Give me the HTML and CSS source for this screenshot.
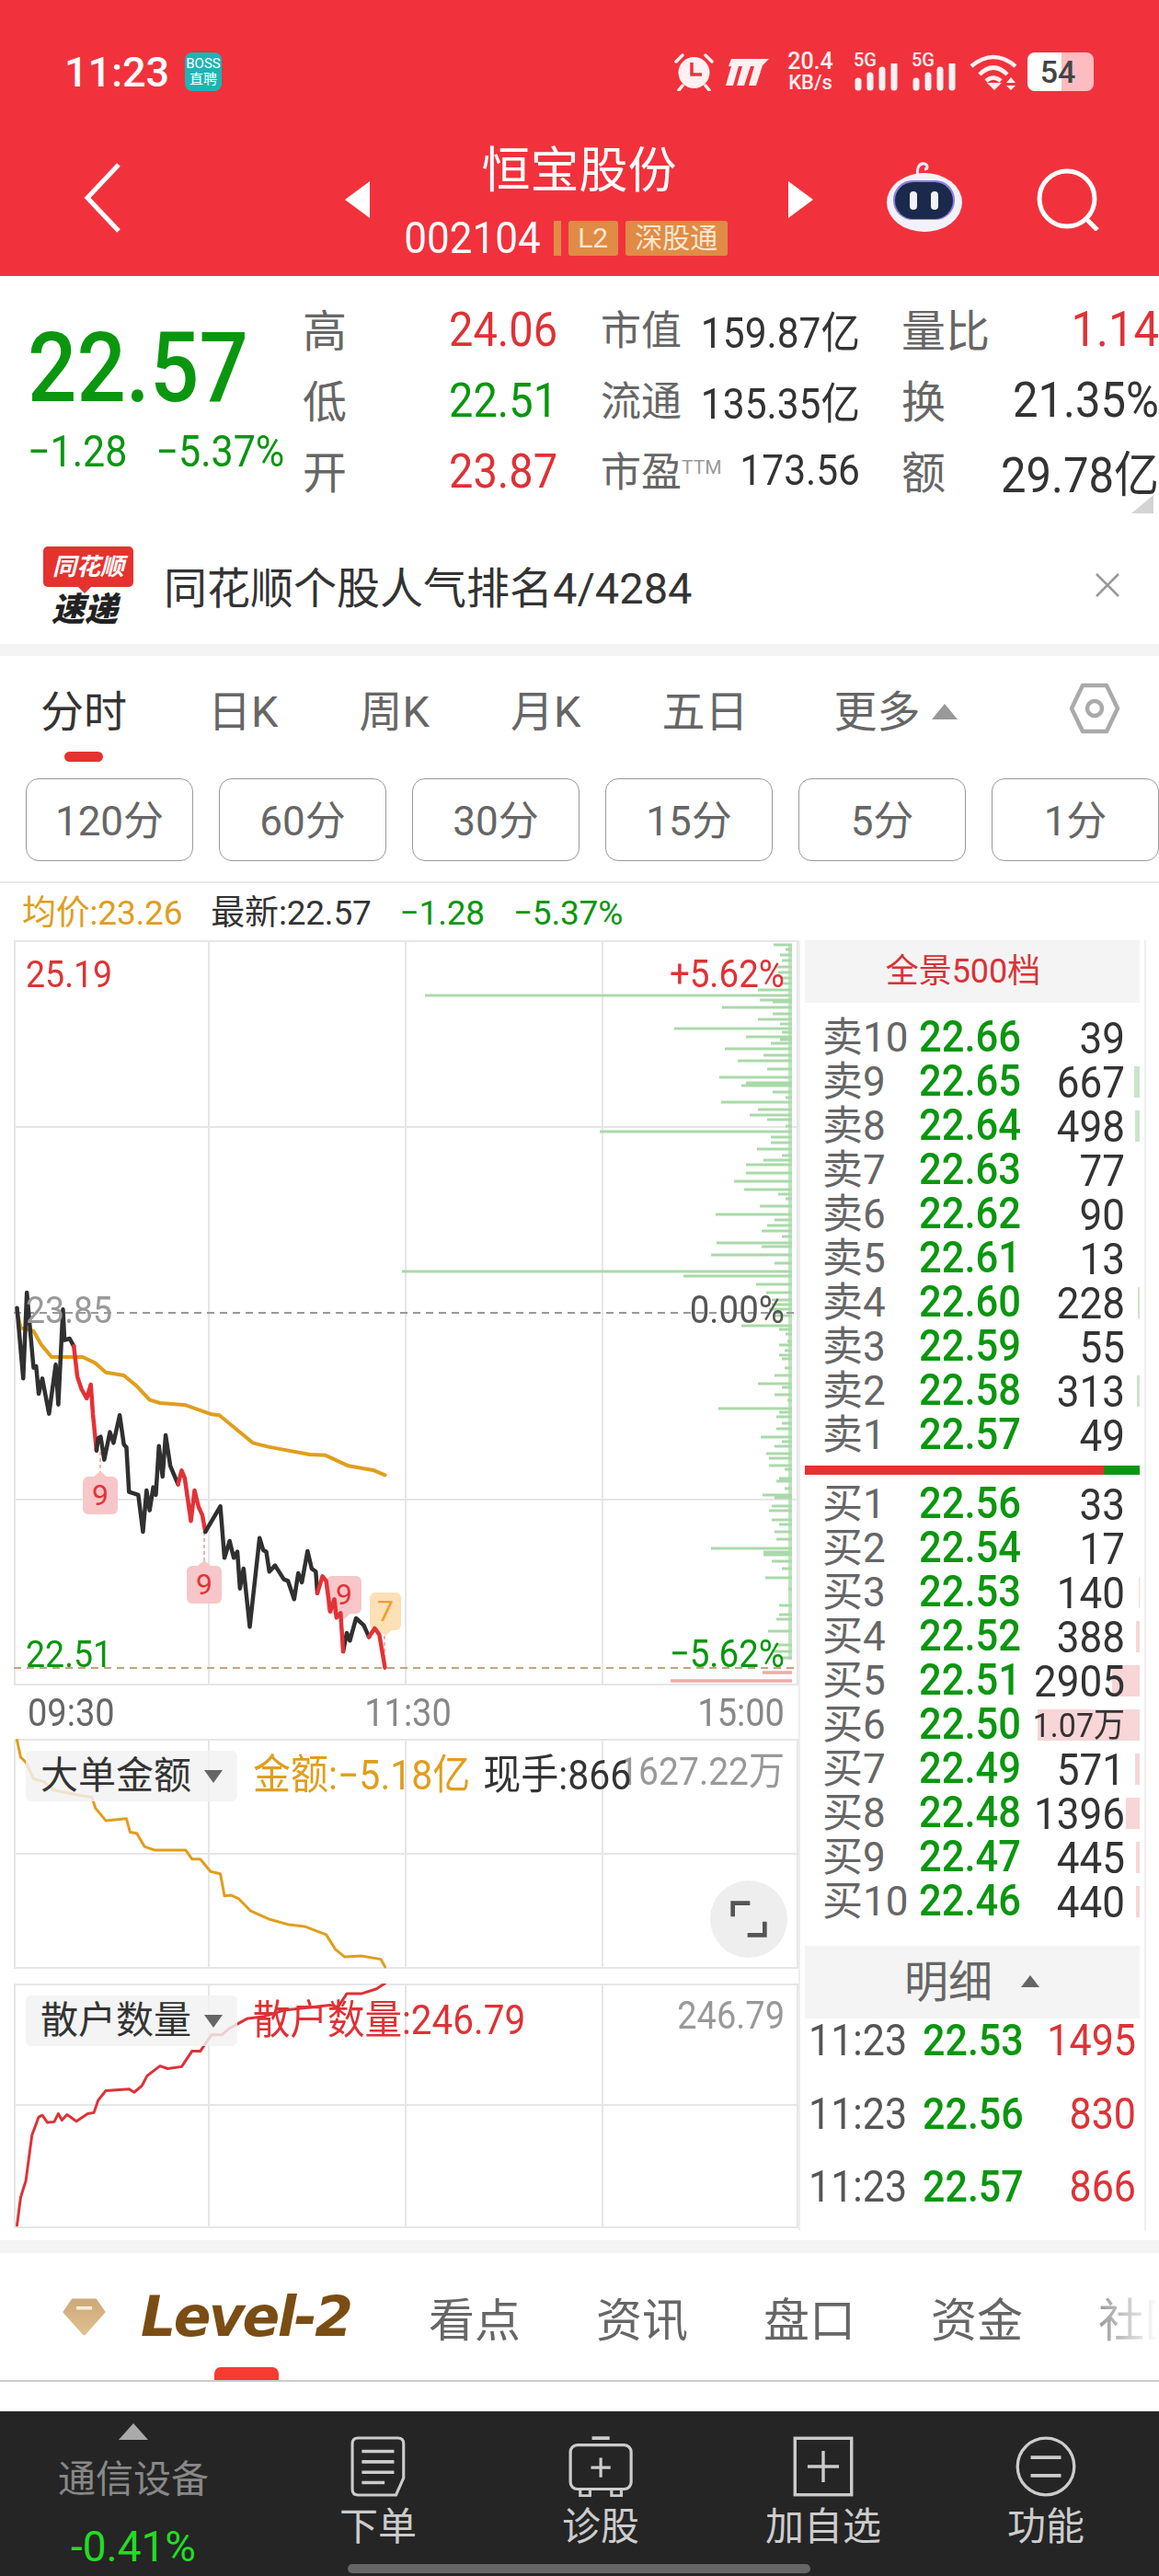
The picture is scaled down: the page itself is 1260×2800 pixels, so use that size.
FILE: index.html
```html
<!DOCTYPE html>
<html lang="zh-CN">

<head>
  <meta charset="UTF-8">
  <meta name="viewport" content="width=device-width, initial-scale=1.0">
  <title>恒宝股份 002104</title>
  <link rel="stylesheet" href="styles.css">
</head>

<body>
  <div class="page">
    <header class="top">
      <div class="status-bar">
        <span class="clock">11:23</span>
        <span class="boss"><b>BOSS</b><b>直聘</b></span>
        <svg class="st-alarm" viewBox="0 0 43 42">
          <path d="M2 10 L9 3 M41 10 L34 3" stroke="#fff0f1" stroke-width="3.5" stroke-linecap="round" />
          <path d="M9 36 L5 41 M34 36 L38 41" stroke="#fff0f1" stroke-width="3.5" stroke-linecap="round" />
          <circle cx="21.5" cy="22" r="17" fill="#fff0f1" />
          <path d="M19 11 V24 H30" fill="none" stroke="#f1323c" stroke-width="3.5" />
        </svg>
        <svg class="st-logo" viewBox="0 0 47 29">
          <path d="M6 0 H47 L40 7 L33 29 H25 L31 8 H27 L20 29 H12 L18 8 H14 L8 29 H0 L6 8 H3 Z" fill="#fff0f1" />
        </svg>
        <span class="speed"><b>20.4</b><b>KB/s</b></span>
        <span class="sim">
          <b>5G</b>
          <svg viewBox="0 0 48 30"><path d="M5 19 V26 M18 13 V26 M31 7 V26 M44 1 V26" stroke="#fff0f1" stroke-width="7" stroke-linecap="round" /></svg>
        </span>
        <span class="sim sim-2">
          <b>5G</b>
          <svg viewBox="0 0 48 30"><path d="M5 19 V26 M18 13 V26 M31 7 V26 M44 1 V26" stroke="#fff0f1" stroke-width="7" stroke-linecap="round" /></svg>
        </span>
        <svg class="st-wifi" viewBox="0 0 51 42">
          <path d="M2 15 Q26 -5 50 15 M11 24 Q26 9 41 24 M18 31 Q26 24 34 31" fill="none" stroke="#fff0f1" stroke-width="4.5" />
          <path d="M19 33 H35 L27 41 Z" fill="#fff0f1" />
          <path d="M40 33 L45 27 L50 33 Z M40 36 H50 L45 41 Z" fill="#fff0f1" />
        </svg>
        <span class="battery"><span class="battery-num">54</span></span>
      </div>
      <div class="nav-bar">
        <svg class="nav-back" viewBox="0 0 40 76"><path d="M38 2 L4 38 L38 74" fill="none" stroke="#fff" stroke-width="5" /></svg>
        <svg class="nav-prev" viewBox="0 0 27 40"><path d="M27 0 V40 L0 20 Z" fill="#fff" /></svg>
        <div class="nav-center">
          <div class="stock-name">恒宝股份</div>
          <div class="stock-code">
            <span class="code-num">002104</span>
            <span class="code-bar"></span>
            <span class="code-tag">L2</span>
            <span class="code-tag code-tag-wide">深股通</span>
          </div>
        </div>
        <svg class="nav-next" viewBox="0 0 27 40"><path d="M0 0 V40 L27 20 Z" fill="#fff" /></svg>
        <svg class="nav-robot" viewBox="0 0 84 77">
          <path d="M35 18 C33 8 36 2 42 3 C46 4 46 9 42 9" fill="none" stroke="#eceaf8" stroke-width="3" />
          <ellipse cx="42" cy="45" rx="41" ry="32" fill="#f3f2fc" />
          <rect x="8" y="21" width="67" height="43" rx="21" fill="#8f7fe0" />
          <rect x="10" y="23" width="63" height="40" rx="20" fill="#1b2a4c" />
          <rect x="26" y="33" width="8" height="20" rx="4" fill="#f1f1f8" />
          <rect x="49" y="33" width="8" height="20" rx="4" fill="#f1f1f8" />
        </svg>
        <svg class="nav-search" viewBox="0 0 69 68">
          <circle cx="33" cy="33" r="30" fill="none" stroke="#fff" stroke-width="5" />
          <path d="M54 55 L66 67" stroke="#fff" stroke-width="5" />
        </svg>
      </div>
    </header>

    <section class="quote">
      <div class="quote-main">
        <div class="last-price">22.57</div>
        <div class="last-change"><span>−1.28</span><span>−5.37%</span></div>
      </div>
      <div class="quote-grid">
        <span class="q-name">高</span><span class="q-val up">24.06</span>
        <div class="kv kv-mid"><span class="q-name">市值</span><span class="q-val dark">159.87亿</span></div>
        <div class="kv kv-end"><span class="q-name">量比</span><span class="q-val up">1.14</span></div>

        <span class="q-name">低</span><span class="q-val down">22.51</span>
        <div class="kv kv-mid"><span class="q-name">流通</span><span class="q-val dark">135.35亿</span></div>
        <div class="kv kv-end"><span class="q-name">换</span><span class="q-val dark">21.35%</span></div>

        <span class="q-name">开</span><span class="q-val up">23.87</span>
        <div class="kv kv-mid"><span class="q-name">市盈<small>TTM</small></span><span class="q-val dark">173.56</span></div>
        <div class="kv kv-end"><span class="q-name">额</span><span class="q-val dark">29.78亿</span></div>
      </div>
      <svg class="quote-fold" viewBox="0 0 24 20"><path d="M24 0 V20 H0 Z" fill="#d4d4d4" /></svg>
    </section>

    <section class="notice">
      <div class="notice-logo">
        <div class="notice-logo-top">同花顺</div>
        <div class="notice-logo-bottom">速递</div>
      </div>
      <div class="notice-text">同花顺个股人气排名4/4284</div>
      <svg class="notice-close" viewBox="0 0 26 26"><path d="M1 1 L25 25 M25 1 L1 25" stroke="#999" stroke-width="2.500" /></svg>
    </section>

    <div class="band"></div>

    <nav class="period-tabs">
      <span class="tab active">分时</span>
      <span class="tab">日K</span>
      <span class="tab">周K</span>
      <span class="tab">月K</span>
      <span class="tab">五日</span>
      <span class="tab tab-more">更多<i class="caret"></i></span>
      <svg class="tab-setting" viewBox="0 0 56 56">
        <path d="M15 3 H41 L53 28 L41 53 H15 L3 28 Z" fill="none" stroke="#aaa" stroke-width="4.500" stroke-linejoin="round" />
        <circle cx="28" cy="28" r="8" fill="none" stroke="#aaa" stroke-width="4.500" />
      </svg>
    </nav>

    <div class="minute-btns">
      <span class="min-btn">120分</span>
      <span class="min-btn">60分</span>
      <span class="min-btn">30分</span>
      <span class="min-btn">15分</span>
      <span class="min-btn">5分</span>
      <span class="min-btn">1分</span>
    </div>

    <div class="info-row">
      <span class="avg">均价:23.26</span>
      <span class="dark">最新:22.57</span>
      <span class="down">−1.28</span>
      <span class="down">−5.37%</span>
    </div>

    <main class="main">
      <div class="charts">
        <div class="chart chart-price">
          <svg class="plot" viewBox="15 1022 853 810">
            <path class="grid" d="M15 1023 H868 M15 1225 H868 M15 1630 H868 M15 1831 H868 M16 1022 V1832 M227 1022 V1832 M441 1022 V1832 M655 1022 V1832 M867 1022 V1832" />
            <rect x="857" y="1026" width="4" height="778" fill="#aad9aa" opacity="0.75" />
            <path class="vol" d="M841 1027H861M854 1032H861M848 1038H861M850 1044H861M842 1051H861M846 1057H861M850 1063H861M850 1069H861M824 1076H861M462 1082H861M826 1087H861M840 1089H861M785 1095H861M840 1102H861M824 1108H861M848 1113H861M733 1118H861M850 1122H861M811 1127H861M848 1130H861M838 1134H861M788 1140H861M830 1147H861M802 1153H861M834 1162H861M782 1171H861M811 1177H861M806 1180H861M840 1187H861M854 1193H861M784 1198H861M824 1206H861M815 1212H861M834 1217H861M854 1224H861M652 1230H861M838 1236H861M838 1242H861M823 1249H861M850 1256H861M830 1261H861M811 1266H861M811 1275H861M798 1284H861M809 1293H861M846 1298H861M854 1303H861M826 1311H861M778 1320H861M842 1326H861M834 1332H861M828 1338H861M850 1344H861M779 1351H861M828 1355H861M773 1364H861M842 1373H861M437 1382H861M743 1387H861M822 1396H861M833 1405H861M839 1413H861M839 1418H861M836 1423H861M842 1430H861M806 1441H861M847 1445H861M854 1450H861M856 1458H861M847 1462H861M853 1468H861M847 1473H861M850 1477H861M853 1487H861M842 1495H861M824 1504H861M850 1508H861M842 1516H861M856 1522H861M781 1531H861M847 1535H861M844 1540H861M850 1547H861M844 1553H861M827 1562H861M850 1567H861M842 1572H861M833 1580H861M836 1585H861M836 1593H861M853 1597H861M847 1607H861M844 1610H861M853 1618H861M829 1625H861M842 1628H861M839 1637H861M836 1642H861M839 1652H861M847 1657H861M842 1665H861M844 1673H861M773 1683H861M830 1687H861M830 1690H861M839 1697H861M850 1705H861M832 1715H861M857 1727H861M847 1745H861M847 1755H861M844 1760H861M835 1773H861M842 1788H861M839 1795H861M850 1802H861" />
            <path class="vol-red" d="M829 1818H861M729 1827H861" />
            <path class="dash-grey" d="M15 1427 H868" />
            <path class="dash-tan" d="M15 1813 H868" />
            <path class="dash-mark" d="M109 1578 V1600 M222 1665 V1697 M418 1778 V1811" />
            <g transform="translate(0 1380) scale(.561 .3333)">
              <polyline class="line-avg" points="33,135 40,190 65,200 80,245 100,285 160,285 185,305 205,335 240,345 265,380 290,425 310,435 360,442 410,472 425,475 490,565 520,578 600,603 630,605 675,640 725,655 746,670" />
              <polyline class="line-black" points="33,125 45,355 52,75 65,320 70,315 75,405 82,355 95,470 108,310 113,440 122,130 125,230 135,225 143,250" />
              <polyline class="line-red" points="143,250 150,350 158,390 168,420 176,375 180,470 187,590" />
              <polyline class="line-black" points="187,590 190,550 195,545 202,620 213,530 220,565 232,475 240,570 245,580 250,725 268,735 277,855 284,720 290,785 297,710 302,735 308,575 315,675 321,540 330,640 345,700" />
              <polyline class="line-red" points="345,700 352,655 358,680 370,820 377,720 385,775 392,800 398,855" />
              <polyline class="line-black" points="398,855 427,772 435,940 445,885 453,940 460,920 465,1040 472,975 484,1165 503,875 510,915 516,920 522,985 533,965 550,1010 558,1015 570,1075 578,990 585,1020 596,918 604,975 612,985 615,1055" />
              <polyline class="line-black" points="665,1245 672,1185 678,1210 690,1137 705,1160 715,1198" />
            </g>
          </svg>
          <span class="chart-label up label-left label-top">25.19</span>
          <span class="chart-label up label-right label-top">+5.62%</span>
          <span class="chart-label grey label-left label-mid">23.85</span>
          <span class="chart-label dim label-right label-mid">0.00%</span>
          <span class="chart-label down label-left label-bottom">22.51</span>
          <span class="chart-label down label-right label-bottom">−5.62%</span>
          <span class="mark mark-a">9</span>
          <span class="mark mark-b">9</span>
          <span class="mark mark-c">9</span>
          <span class="mark mark-d">7</span>
          <svg class="plot plot-top" viewBox="15 1022 853 810">
            <g transform="translate(0 1380) scale(.561 .3333)">
              <polyline class="line-red" points="615,1055 625,1000 632,1015 640,1115 648,1075 652,1135 660,1120 665,1245" />
              <polyline class="line-red" points="715,1198 726,1170 735,1190 746,1298" />
            </g>
          </svg>
        </div>

        <div class="axis"><span>09:30</span><span class="axis-mid">11:30</span><span>15:00</span></div>

        <div class="chart chart-big">
          <svg class="plot" viewBox="15 1890 853 250">
            <path class="grid" d="M15 1891 H868 M15 2015 H868 M15 2139 H868 M16 1890 V2140 M227 1890 V2140 M441 1890 V2140 M655 1890 V2140 M867 1890 V2140" />
            <g transform="translate(0 1860) scale(.561 .3571)">
              <polyline class="line-amount" points="33,88 40,140 50,155 65,205 85,215 105,240 150,255 178,262 185,295 205,333 245,327 252,368 265,372 280,412 300,423 360,423 372,450 388,450 408,488 427,495 435,562 447,560 462,570 485,607 520,632 560,650 590,655 632,680 650,725 668,748 700,745 738,755 746,778" />
            </g>
          </svg>
          <span class="pill pill-first">大单金额<i class="pill-caret"></i></span>
          <span class="chart-label grey label-right sub-right-first">1627.22万</span>
          <div class="sub-info sub-info-first"><span class="avg">金额:−5.18亿</span><span class="dark">现手:866</span></div>
          <span class="expand">
            <svg viewBox="0 0 30 30"><path d="M2 13 V2 H16 M28 17 V28 H14" fill="none" stroke="#555" stroke-width="3.500" /></svg>
          </span>
        </div>

        <div class="chart chart-retail">
          <svg class="plot" viewBox="15 2156 853 266">
            <path class="grid" d="M15 2157 H868 M15 2288 H868 M15 2421 H868 M16 2156 V2422 M227 2156 V2422 M441 2156 V2422 M655 2156 V2422 M867 2156 V2422" />
            <g transform="translate(0 1860) scale(.561 .3571)">
              <polyline class="line-retail" points="33,1565 40,1480 50,1430 62,1290 75,1235 82,1230 92,1252 105,1250 113,1225 120,1245 130,1228 148,1248 170,1225 182,1222 190,1185 205,1155 250,1150 260,1160 275,1140 285,1110 310,1080 325,1088 352,1082 372,1035 388,1035 410,985 430,985 445,965 480,935 510,930 550,910 640,895 655,900 672,860 700,860 730,845 746,828" />
            </g>
          </svg>
          <span class="pill pill-second">散户数量<i class="pill-caret"></i></span>
          <div class="sub-info sub-info-second"><span class="up">散户数量:246.79</span></div>
          <span class="chart-label grey label-right sub-right-second">246.79</span>
        </div>
      </div>

      <aside class="depth">
        <div class="depth-head">全景500档</div>
        <div class="depth-rows depth-sell">
          <div class="depth-row"><span class="d-name">卖10</span><span class="d-price">22.66</span><span class="d-vol">39</span></div>
          <div class="depth-row"><i class="d-bar d-bar-sell" style="width:6px"></i><span class="d-name">卖9</span><span class="d-price">22.65</span><span class="d-vol">667</span></div>
          <div class="depth-row"><i class="d-bar d-bar-sell" style="width:5px"></i><span class="d-name">卖8</span><span class="d-price">22.64</span><span class="d-vol">498</span></div>
          <div class="depth-row"><span class="d-name">卖7</span><span class="d-price">22.63</span><span class="d-vol">77</span></div>
          <div class="depth-row"><span class="d-name">卖6</span><span class="d-price">22.62</span><span class="d-vol">90</span></div>
          <div class="depth-row"><span class="d-name">卖5</span><span class="d-price">22.61</span><span class="d-vol">13</span></div>
          <div class="depth-row"><i class="d-bar d-bar-sell" style="width:2px"></i><span class="d-name">卖4</span><span class="d-price">22.60</span><span class="d-vol">228</span></div>
          <div class="depth-row"><span class="d-name">卖3</span><span class="d-price">22.59</span><span class="d-vol">55</span></div>
          <div class="depth-row"><i class="d-bar d-bar-sell" style="width:3px"></i><span class="d-name">卖2</span><span class="d-price">22.58</span><span class="d-vol">313</span></div>
          <div class="depth-row"><span class="d-name">卖1</span><span class="d-price">22.57</span><span class="d-vol">49</span></div>
        </div>
        <div class="ratio"><span class="ratio-buy"></span><span class="ratio-sell"></span></div>
        <div class="depth-rows depth-buy">
          <div class="depth-row"><span class="d-name">买1</span><span class="d-price">22.56</span><span class="d-vol">33</span></div>
          <div class="depth-row"><span class="d-name">买2</span><span class="d-price">22.54</span><span class="d-vol">17</span></div>
          <div class="depth-row"><i class="d-bar d-bar-buy" style="width:1px"></i><span class="d-name">买3</span><span class="d-price">22.53</span><span class="d-vol">140</span></div>
          <div class="depth-row"><i class="d-bar d-bar-buy" style="width:4px"></i><span class="d-name">买4</span><span class="d-price">22.52</span><span class="d-vol">388</span></div>
          <div class="depth-row"><i class="d-bar d-bar-buy" style="width:30px"></i><span class="d-name">买5</span><span class="d-price">22.51</span><span class="d-vol">2905</span></div>
          <div class="depth-row"><i class="d-bar d-bar-buy" style="width:111px"></i><span class="d-name">买6</span><span class="d-price">22.50</span><span class="d-vol d-vol-small">1.07万</span></div>
          <div class="depth-row"><i class="d-bar d-bar-buy" style="width:5px"></i><span class="d-name">买7</span><span class="d-price">22.49</span><span class="d-vol">571</span></div>
          <div class="depth-row"><i class="d-bar d-bar-buy" style="width:15px"></i><span class="d-name">买8</span><span class="d-price">22.48</span><span class="d-vol">1396</span></div>
          <div class="depth-row"><i class="d-bar d-bar-buy" style="width:4px"></i><span class="d-name">买9</span><span class="d-price">22.47</span><span class="d-vol">445</span></div>
          <div class="depth-row"><i class="d-bar d-bar-buy" style="width:4px"></i><span class="d-name">买10</span><span class="d-price">22.46</span><span class="d-vol">440</span></div>
        </div>
        <div class="detail-head">明细<i class="detail-caret"></i></div>
        <div class="trades">
          <div class="trade"><span class="t-time">11:23</span><span class="t-price">22.53</span><span class="t-vol">1495</span></div>
          <div class="trade"><span class="t-time">11:23</span><span class="t-price">22.56</span><span class="t-vol">830</span></div>
          <div class="trade"><span class="t-time">11:23</span><span class="t-price">22.57</span><span class="t-vol">866</span></div>
        </div>
      </aside>
    </main>

    <div class="band band-low"></div>

    <nav class="news-tabs">
      <svg class="gem" viewBox="0 0 47 41">
        <defs>
          <linearGradient id="gemFill" x1="0" y1="0" x2="0" y2="1">
            <stop offset="0" stop-color="#cda97a" />
            <stop offset="1" stop-color="#e0c08e" />
          </linearGradient>
        </defs>
        <path d="M11 2 H36 L45 15 L23.500 39 L2 15 Z" fill="url(#gemFill)" stroke="url(#gemFill)" stroke-width="3" stroke-linejoin="round" />
        <rect x="15" y="9" width="17" height="3.500" fill="#f7eddc" />
      </svg>
      <span class="level2">Level-2</span>
      <span class="news-tab">看点</span>
      <span class="news-tab">资讯</span>
      <span class="news-tab">盘口</span>
      <span class="news-tab">资金</span>
      <span class="news-tab news-tab-fade">社区</span>
      <i class="news-mark"></i>
    </nav>

    <footer class="bottom">
      <div class="sector">
        <i class="sector-caret"></i>
        <div class="sector-name">通信设备</div>
        <div class="sector-pct">-0.41%</div>
      </div>
      <div class="action">
        <svg class="action-icon" viewBox="0 0 58 64">
          <path d="M8 2 H50 Q56 2 56 8 V44 L48 62 H8 Q2 62 2 56 V8 Q2 2 8 2 Z" fill="none" stroke="#ccc" stroke-width="3" />
          <path d="M12 16 H46 M12 27 H46 M12 38 H46 M12 49 H36" stroke="#ccc" stroke-width="3.500" />
        </svg>
        <span>下单</span>
      </div>
      <div class="action">
        <svg class="action-icon" viewBox="0 0 66 62">
          <path d="M24 2 H42" stroke="#ccc" stroke-width="3.500" />
          <rect x="2" y="9" width="62" height="45" rx="7" fill="none" stroke="#ccc" stroke-width="3" />
          <path d="M33 22 V42 M23 32 H43 M12 55 V61 H22 V55 M44 55 V61 H54 V55" fill="none" stroke="#ccc" stroke-width="3" />
        </svg>
        <span>诊股</span>
      </div>
      <div class="action">
        <svg class="action-icon" viewBox="0 0 58 58">
          <rect x="2" y="2" width="54" height="54" fill="none" stroke="#ccc" stroke-width="3" />
          <path d="M29 14 V44 M14 29 H44" stroke="#ccc" stroke-width="3" />
        </svg>
        <span>加自选</span>
      </div>
      <div class="action">
        <svg class="action-icon" viewBox="0 0 60 60">
          <circle cx="30" cy="30" r="28" fill="none" stroke="#ccc" stroke-width="3" />
          <path d="M15 21 H45 M15 39 H45" stroke="#ccc" stroke-width="3.500" />
        </svg>
        <span>功能</span>
      </div>
      <i class="home-bar"></i>
    </footer>
  </div>
</body>

</html>
```

FILE: styles.css
```css
* {
  box-sizing: border-box;
}

body {
  margin: 0;
  background: #fff;
  font-family: Roboto, "Noto Sans CJK SC", sans-serif;
}

i {
  font-style: normal;
}

.page {
  position: relative;
  width: 1260px;
  height: 2800px;
  overflow: hidden;
  background: #fff;
}

.up {
  color: #de3236;
}

.down {
  color: #0a960f;
}

.dark {
  color: #333;
}

.grey {
  color: #999;
}

.dim {
  color: #555;
}

.avg {
  color: #e09e1c;
}

/* the app's digits are taller and narrower than Roboto */
.code-num,
.last-change span,
.q-val,
.chart-label,
.axis span,
.d-price,
.d-vol,
.t-time,
.t-price,
.t-vol,
.sub-info span {
  display: inline-block;
  transform: scaleY(1.1);
}

/* header */
.top {
  height: 300px;
  background: #f1323c;
  color: #fff;
}

.status-bar {
  display: flex;
  align-items: center;
  height: 156px;
  padding-left: 70px;
}

.clock {
  width: 131px;
  font-size: 45px;
  font-weight: 500;
}

.boss {
  display: flex;
  flex-direction: column;
  align-items: center;
  justify-content: center;
  width: 40px;
  height: 42px;
  border-radius: 8px;
  background: #1fb3b5;
  font-size: 15px;
  line-height: 17px;
}

.boss b {
  font-weight: 400;
}

.st-alarm {
  width: 43px;
  height: 42px;
  margin-left: 492px;
}

.st-logo {
  width: 47px;
  height: 29px;
  margin-left: 13px;
}

.speed {
  display: flex;
  flex-direction: column;
  align-items: center;
  width: 54px;
  margin-left: 18px;
  font-size: 25px;
  line-height: 23px;
  color: #fff0f1;
}

.speed b {
  font-weight: 500;
}

.speed b + b {
  font-size: 22px;
}

.sim {
  position: relative;
  width: 48px;
  height: 42px;
  margin-left: 20px;
  color: #fff0f1;
}

.sim b {
  display: block;
  font-size: 20px;
  font-weight: 500;
  line-height: 16px;
}

.sim svg {
  position: absolute;
  left: 0;
  bottom: 0;
  width: 48px;
  height: 30px;
}

.sim-2 {
  margin-left: 15px;
}

.st-wifi {
  width: 51px;
  height: 42px;
  margin-left: 15px;
}

.battery {
  display: block;
  width: 72px;
  height: 42px;
  margin-left: 12px;
  border-radius: 8px;
  background: linear-gradient(90deg, #fff 37px, #fdbcc0 37px);
}

.battery-num {
  display: block;
  width: 66px;
  color: #444;
  font-size: 34px;
  font-weight: 500;
  line-height: 42px;
  text-align: center;
}

.nav-bar {
  display: flex;
  align-items: flex-start;
  height: 144px;
}

.nav-back {
  width: 40px;
  height: 76px;
  margin: 21px 0 0 91px;
}

.nav-prev {
  width: 27px;
  height: 40px;
  margin: 41px 0 0 244px;
}

.nav-center {
  width: 455px;
}

.stock-name {
  margin-top: 2px;
  font-size: 53px;
  line-height: 56px;
  text-align: center;
}

.stock-code {
  display: flex;
  justify-content: center;
  align-items: center;
  height: 38px;
  margin: 26px 29px 0 0;
}

.code-num {
  font-size: 44px;
}

.code-bar {
  width: 8px;
  height: 38px;
  margin-left: 14px;
  background: #e08b46;
}

.code-tag {
  width: 54px;
  height: 38px;
  margin-left: 8px;
  border-radius: 3px;
  background: #e08b46;
  color: #fde6cf;
  font-size: 30px;
  line-height: 38px;
  text-align: center;
}

.code-tag-wide {
  width: 111px;
}

.nav-next {
  width: 27px;
  height: 40px;
  margin-top: 41px;
}

.nav-robot {
  width: 84px;
  height: 77px;
  margin: 19px 0 0 79px;
}

.nav-search {
  width: 69px;
  height: 68px;
  margin: 27px 0 0 80px;
}

/* quote */
.quote {
  position: relative;
  display: flex;
  height: 273px;
  padding: 17px 0 0 30px;
}

.quote-main {
  width: 299px;
}

.last-price {
  display: inline-block;
  height: 112px;
  margin-top: 27px;
  color: #0a960f;
  font-size: 94px;
  font-weight: 500;
  line-height: 112px;
  white-space: nowrap;
  transform: scaleY(1.13);
}

.last-change {
  display: flex;
  gap: 31px;
  margin-top: 0;
  color: #0a960f;
  font-size: 43px;
  line-height: 68px;
  white-space: nowrap;
}

.quote-grid {
  display: grid;
  grid-template-columns: 159px 165px 327px 280px;
  grid-auto-rows: 77px;
  align-items: center;
}

.q-name {
  color: #666;
  font-size: 48px;
  white-space: nowrap;
}

.q-name small {
  vertical-align: 14px;
  color: #999;
  font-size: 21px;
}

.q-val {
  margin-top: 4px;
  font-size: 47px;
  white-space: nowrap;
}

.kv {
  display: flex;
  justify-content: space-between;
  align-items: center;
}

.kv-mid {
  padding-right: 45px;
}

.kv-mid .q-name {
  font-size: 44px;
}

.kv-mid .q-val {
  font-size: 42.5px;
}

.kv-end .q-val {
  font-size: 49px;
}

.quote-fold {
  position: absolute;
  right: 6px;
  top: 238px;
  width: 24px;
  height: 20px;
}

/* notice */
.notice {
  display: flex;
  align-items: center;
  height: 127px;
  padding: 0 0 2px 47px;
}

.notice-logo {
  width: 98px;
  height: 84px;
}

.notice-logo-top {
  position: relative;
  height: 44px;
  border-radius: 5px;
  background: #e5322f;
  color: #fff;
  font-size: 26px;
  font-style: italic;
  font-weight: 700;
  line-height: 44px;
  text-align: center;
}

.notice-logo-top::after {
  content: "";
  position: absolute;
  left: 38px;
  bottom: -7px;
  border-left: 7px solid transparent;
  border-right: 7px solid transparent;
  border-top: 7px solid #e5322f;
}

.notice-logo-bottom {
  margin: 8px 8px 0 0;
  color: #222;
  font-size: 36px;
  font-style: italic;
  font-weight: 900;
  line-height: 34px;
  text-align: center;
}

.notice-text {
  width: 1013px;
  margin-left: 33px;
  color: #333;
  font-size: 47px;
  white-space: nowrap;
}

.notice-close {
  flex: none;
  width: 26px;
  height: 26px;
}

.band {
  height: 13px;
  background: #f4f4f4;
}

/* period tabs */
.period-tabs {
  position: relative;
  display: flex;
  align-items: center;
  gap: 88px;
  height: 133px;
  padding: 0 0 20px 44px;
}

.tab {
  position: relative;
  color: #666;
  font-size: 47px;
  white-space: nowrap;
}

.tab.active {
  color: #333;
}

.tab.active::after {
  content: "";
  position: absolute;
  left: 26px;
  bottom: -24px;
  width: 42px;
  height: 11px;
  border-radius: 6px;
  background: #e5322f;
}

.tab-more {
  margin-left: 5px;
}

.caret {
  display: inline-block;
  margin-left: 12px;
  border-left: 14px solid transparent;
  border-right: 14px solid transparent;
  border-bottom: 17px solid #999;
  vertical-align: 8px;
}

.tab-setting {
  position: absolute;
  left: 1162px;
  top: 29px;
  width: 56px;
  height: 56px;
}

.minute-btns {
  display: flex;
  gap: 28px;
  height: 112px;
  padding-left: 28px;
}

.min-btn {
  flex: 0 0 182px;
  height: 90px;
  border: 1px solid #999;
  border-radius: 14px;
  color: #666;
  font-size: 44px;
  line-height: 92px;
  text-align: center;
}

.info-row {
  display: flex;
  gap: 31px;
  height: 64px;
  padding-left: 24px;
  border-top: 2px solid #e8e8e8;
  font-size: 37px;
  letter-spacing: -0.2px;
  line-height: 66px;
}

/* main area */
.main {
  display: flex;
  height: 1402px;
  padding-left: 15px;
}

.charts {
  width: 853px;
}

.chart {
  position: relative;
}

.chart-price {
  height: 810px;
}

.chart-big {
  height: 250px;
}

.chart-retail {
  height: 266px;
  margin-top: 16px;
}

.plot {
  display: block;
  width: 100%;
  height: 100%;
}

.plot-top {
  position: absolute;
  left: 0;
  top: 0;
}

.plot polyline,
.plot path {
  vector-effect: non-scaling-stroke;
}

.grid {
  fill: none;
  stroke: #e6e6e6;
  stroke-width: 2;
}

.vol {
  fill: none;
  stroke: #aad9aa;
  stroke-width: 3;
}

.vol-red {
  fill: none;
  stroke: #f0aaaa;
  stroke-width: 3.5;
}

.dash-grey {
  fill: none;
  stroke: #999;
  stroke-width: 2;
  stroke-dasharray: 8 6;
}

.dash-tan {
  fill: none;
  stroke: #c2a57c;
  stroke-width: 2;
  stroke-dasharray: 8 6;
}

.dash-mark {
  fill: none;
  stroke: #e59a9a;
  stroke-width: 1.5;
  stroke-dasharray: 4 3;
}

.line-black,
.line-red,
.line-avg,
.line-amount,
.line-retail {
  fill: none;
  stroke-linejoin: round;
  stroke-linecap: round;
}

.line-black {
  stroke: #303030;
  stroke-width: 4.5;
}

.line-red {
  stroke: #e33236;
  stroke-width: 4.5;
}

.line-avg {
  stroke: #e09e1c;
  stroke-width: 4;
}

.line-amount {
  stroke: #e09e1c;
  stroke-width: 3;
}

.line-retail {
  stroke: #dc3238;
  stroke-width: 3;
}

.chart-label {
  position: absolute;
  font-size: 37.5px;
  line-height: 40px;
  white-space: nowrap;
}

.label-left {
  left: 13px;
}

.label-right {
  right: 15px;
  font-size: 38.5px;
}

.label-top {
  top: 17px;
}

.label-mid {
  top: 382px;
}

.label-bottom {
  top: 756px;
}

.mark {
  position: absolute;
  width: 38px;
  height: 41px;
  border-radius: 6px;
  background: #f7c6c8;
  color: #e33236;
  font-size: 32px;
  line-height: 41px;
  text-align: center;
}

.mark::after {
  content: "";
  position: absolute;
  left: 12px;
  border-left: 7px solid transparent;
  border-right: 7px solid transparent;
}

.mark-a::after,
.mark-b::after {
  top: -6px;
  border-bottom: 6px solid #f7c6c8;
}

.mark-c::after,
.mark-d::after {
  bottom: -6px;
  border-top: 6px solid #f7c6c8;
}

.mark-a {
  left: 75px;
  top: 583px;
}

.mark-b {
  left: 188px;
  top: 680px;
}

.mark-c {
  left: 340px;
  top: 691px;
}

.mark-d {
  left: 387px;
  top: 709px;
  width: 34px;
  background: #fde0b6;
  color: #efa02c;
}

.mark-d::after {
  left: 10px;
  border-top-color: #fde0b6;
}

.axis {
  display: flex;
  justify-content: space-between;
  height: 58px;
  padding: 0 15px;
  color: #888;
  font-size: 38px;
  line-height: 61px;
}

.axis span:first-child {
  color: #666;
}

.axis-mid {
  margin-left: 4px;
}

.pill {
  position: absolute;
  left: 13px;
  width: 230px;
  height: 55px;
  padding-left: 16px;
  border-radius: 6px;
  background: rgba(242, 242, 242, 0.82);
  color: #333;
  font-size: 41px;
  line-height: 54px;
}

.pill-first {
  top: 13px;
}

.pill-second {
  top: 13px;
}

.pill-caret {
  position: absolute;
  left: 194px;
  top: 21px;
  border-left: 10px solid transparent;
  border-right: 10px solid transparent;
  border-top: 14px solid #666;
}

.sub-info {
  position: absolute;
  left: 260px;
  display: flex;
  gap: 14px;
  font-size: 41px;
  line-height: 54px;
  white-space: nowrap;
}

.sub-info-first,
.sub-info-second {
  top: 13px;
}

.sub-info-second {
  font-size: 40.5px;
}

.sub-right-first {
  top: 16px;
  font-size: 39px;
}

.sub-right-second {
  top: 15px;
  font-size: 38px;
}

.expand {
  position: absolute;
  left: 757px;
  top: 154px;
  display: flex;
  align-items: center;
  justify-content: center;
  width: 84px;
  height: 84px;
  border-radius: 50%;
  background: #eee;
}

.expand svg {
  width: 40px;
  height: 40px;
}

/* order book */
.depth {
  width: 378px;
  height: 1402px;
  padding: 0 5px;
  border-left: 2px solid #eee;
  border-right: 2px solid #eee;
}

.depth-head {
  height: 68px;
  padding-right: 20px;
  background: #f4f4f4;
  color: #d93236;
  font-size: 36px;
  line-height: 68px;
  text-align: center;
}

.depth-sell {
  margin-top: 14px;
}

.depth-row {
  position: relative;
  display: flex;
  height: 48px;
  padding: 0 16px 0 19px;
  line-height: 48px;
}

.d-name {
  position: relative;
  width: 105px;
  color: #666;
  font-size: 44px;
  white-space: nowrap;
}

.d-price {
  position: relative;
  width: 109px;
  height: 40px;
  margin-top: 4px;
  color: #0a960f;
  font-size: 43.5px;
  font-weight: 500;
  line-height: 40px;
}

.d-vol {
  position: relative;
  flex: 1;
  height: 40px;
  margin-top: 4px;
  color: #333;
  font-size: 44px;
  line-height: 40px;
  text-align: right;
}

.d-vol-small {
  font-size: 34px;
}

.d-bar {
  position: absolute;
  right: 0;
  top: 7px;
  height: 34px;
}

.d-bar-sell {
  background: #c9e6c9;
}

.d-bar-buy {
  background: #f8d5d6;
}

.ratio {
  display: flex;
  height: 10px;
  margin: 9px 0 8px;
}

.ratio-buy {
  width: 325px;
  background: #e5322f;
}

.ratio-sell {
  flex: 1;
  background: #0a960f;
}

.detail-head {
  position: relative;
  height: 79px;
  margin-top: 24px;
  padding-right: 52px;
  background: #f4f4f4;
  color: #666;
  font-size: 48px;
  line-height: 79px;
  text-align: center;
}

.detail-caret {
  position: absolute;
  left: 235px;
  top: 32px;
  border-left: 10px solid transparent;
  border-right: 10px solid transparent;
  border-bottom: 13px solid #666;
}

.trades {
  display: flex;
  flex-direction: column;
  gap: 27.500px;
  margin-top: -2px;
}

.trade {
  display: flex;
  height: 52px;
  padding: 0 4px 0 4px;
  font-size: 43px;
  line-height: 52px;
}

.t-time {
  width: 124px;
  color: #555;
}

.t-price {
  width: 110px;
  color: #0a960f;
  font-weight: 500;
}

.t-vol {
  flex: 1;
  color: #de3236;
  text-align: right;
}

/* news tabs */
.band-low {
  height: 14px;
  margin-top: 11px;
}

.news-tabs {
  position: relative;
  display: flex;
  align-items: center;
  height: 140px;
  padding-left: 68px;
  overflow: hidden;
  border-bottom: 2px solid #ccc;
}

.gem {
  flex: none;
  width: 47px;
  height: 41px;
}

.level2 {
  flex: none;
  width: 313px;
  margin-left: 38px;
  color: #7a4d14;
  font-family: "DejaVu Sans", sans-serif;
  font-size: 60px;
  font-style: italic;
  font-weight: 700;
  letter-spacing: -2.5px;
}

.news-tab {
  flex: none;
  width: 182px;
  color: #666;
  font-size: 50px;
  white-space: nowrap;
}

.news-tab-fade {
  background: linear-gradient(90deg, #999, #fff 65px);
  -webkit-background-clip: text;
  background-clip: text;
  color: transparent;
}

.news-mark {
  position: absolute;
  left: 233px;
  bottom: 0;
  width: 70px;
  height: 14px;
  border-radius: 7px 7px 0 0;
  background: #f73b33;
}

/* bottom bar */
.bottom {
  position: relative;
  display: flex;
  height: 179px;
  margin-top: 32px;
  background: #252525;
}

.sector {
  display: flex;
  flex-direction: column;
  align-items: center;
  width: 290px;
  padding-top: 13px;
}

.sector-caret {
  border-left: 16px solid transparent;
  border-right: 16px solid transparent;
  border-bottom: 18px solid #aaa;
}

.sector-name {
  margin-top: 18px;
  color: #888;
  font-size: 41px;
  line-height: 50px;
}

.sector-pct {
  margin-top: 23px;
  color: #22dd22;
  font-size: 46px;
  line-height: 50px;
}

.action {
  display: flex;
  flex-direction: column;
  align-items: center;
  width: 242px;
  padding-top: 27px;
  color: #ccc;
  font-size: 42px;
  line-height: 50px;
}

.action-icon {
  height: 66px;
  margin-bottom: 8px;
}

.home-bar {
  position: absolute;
  left: 378px;
  bottom: 3px;
  width: 503px;
  height: 10px;
  border-radius: 5px;
  background: #666;
}
```
